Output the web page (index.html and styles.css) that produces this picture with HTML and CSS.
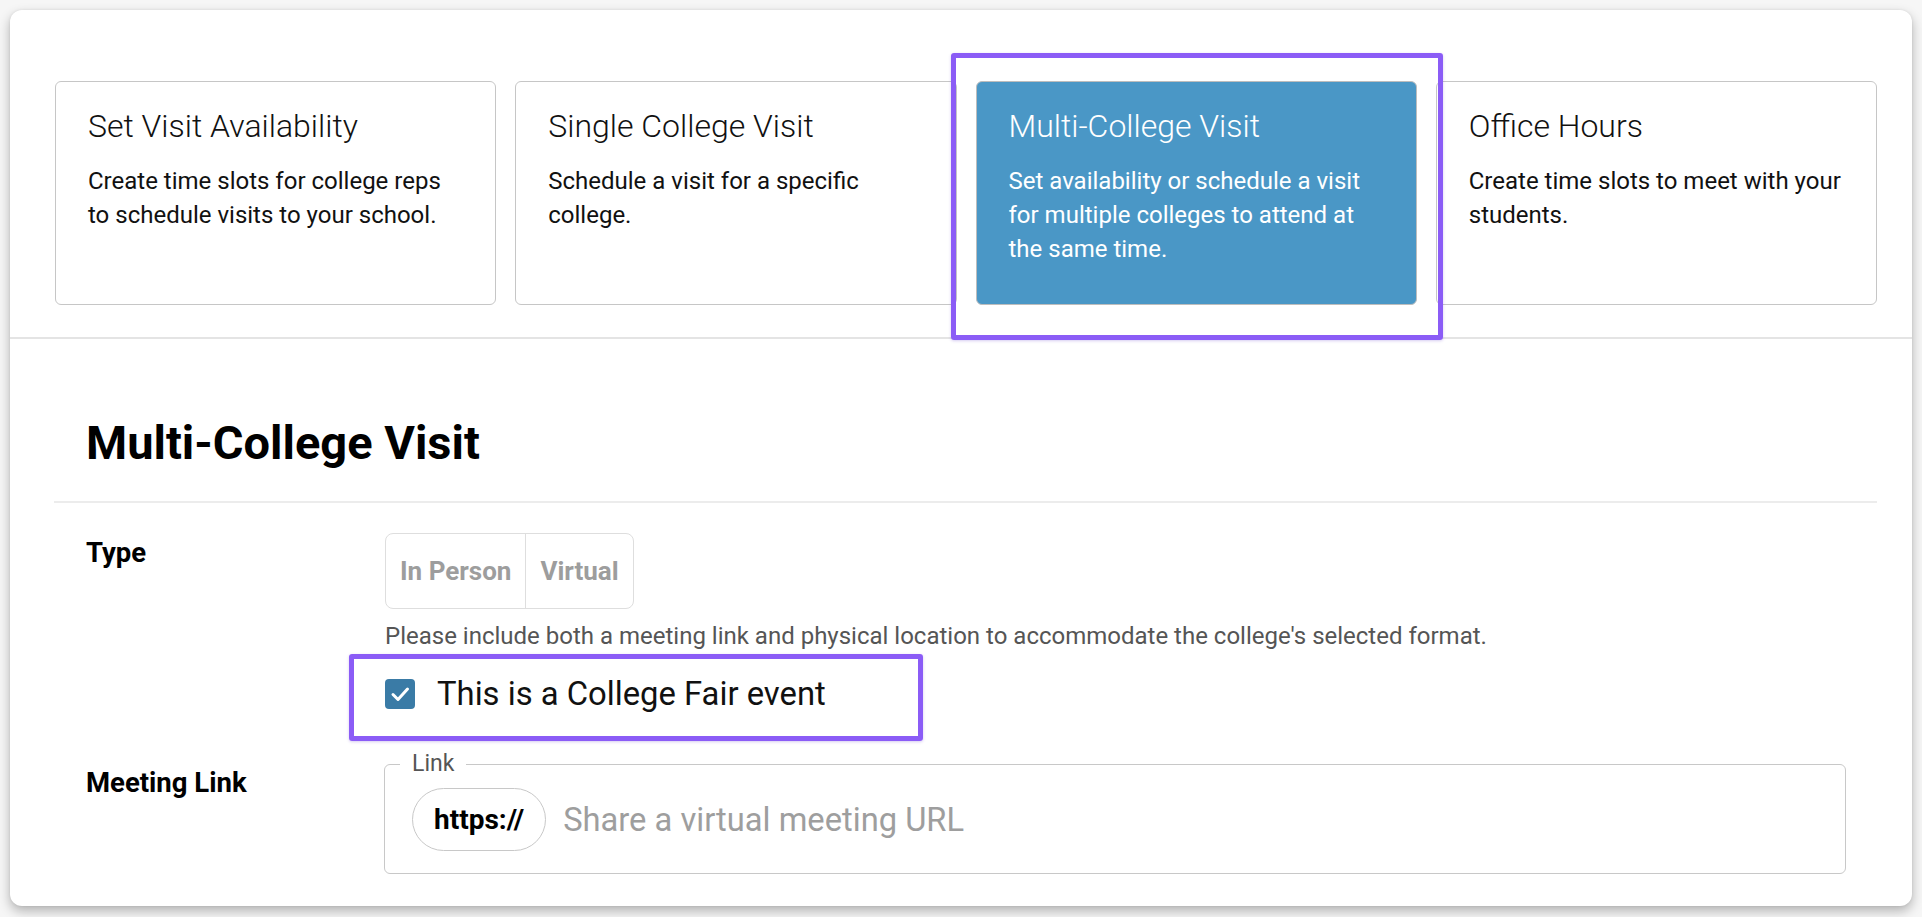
FILE: index.html
```html
<!DOCTYPE html>
<html lang="en">
<head>
<meta charset="utf-8">
<title>Multi-College Visit</title>
<link rel="stylesheet" href="styles.css">
</head>
<body>
<div class="card">
  <div class="types">
    <div class="tile">
      <div class="tile-title">Set Visit Availability</div>
      <div class="tile-desc">Create time slots for college reps to schedule visits to your school.</div>
    </div>
    <div class="tile">
      <div class="tile-title">Single College Visit</div>
      <div class="tile-desc">Schedule a visit for a specific college.</div>
    </div>
    <div class="tile tile-active">
      <div class="tile-title">Multi-College Visit</div>
      <div class="tile-desc">Set availability or schedule a visit for multiple colleges to attend at the same time.</div>
    </div>
    <div class="tile">
      <div class="tile-title">Office Hours</div>
      <div class="tile-desc">Create time slots to meet with your students.</div>
    </div>
  </div>
  <div class="highlight highlight-tile"></div>

  <div class="form">
    <h1 class="form-title">Multi-College Visit</h1>
    <div class="row row-type">
      <div class="label">Type</div>
      <div class="field">
        <div class="toggle">
          <span class="toggle-btn">In Person</span>
          <span class="toggle-btn toggle-btn-last">Virtual</span>
        </div>
        <div class="helper">Please include both a meeting link and physical location to accommodate the college's selected format.</div>
        <div class="check-row">
          <span class="checkbox">
            <svg viewBox="0 0 30 30" width="30" height="30"><path d="M8 15.5 L13 20.5 L22.5 10" fill="none" stroke="#fff" stroke-width="3" stroke-linecap="round" stroke-linejoin="round"/></svg>
          </span>
          <span class="check-label">This is a College Fair event</span>
          <div class="highlight highlight-check"></div>
        </div>
      </div>
    </div>
    <div class="row row-link">
      <div class="label label-link">Meeting Link</div>
      <div class="field">
        <fieldset class="link-box">
          <legend class="link-legend">Link</legend>
          <div class="link-inner">
            <span class="pill">https://</span>
            <span class="placeholder">Share a virtual meeting URL</span>
          </div>
        </fieldset>
      </div>
    </div>
  </div>
</div>
</body>
</html>
```

FILE: styles.css
```css
html, body {
  margin: 0;
  padding: 0;
}
body {
  background: #f6f6f6;
  font-family: Roboto, "Liberation Sans", Arial, sans-serif;
  color: #111;
  width: 1922px;
  height: 917px;
  overflow: hidden;
}
.card {
  position: relative;
  margin: 10px;
  width: 1902px;
  height: 896px;
  background: #fff;
  border-radius: 12px;
  box-shadow: 0 5px 12px rgba(0, 0, 0, 0.28), 0 0 3px rgba(0, 0, 0, 0.08);
  box-sizing: border-box;
  overflow: hidden;
}
.types {
  display: grid;
  grid-template-columns: repeat(4, 1fr);
  column-gap: 19px;
  padding: 71px 35px 32px 45px;
  border-bottom: 2px solid #e4e4e4;
}
.tile {
  height: 224px;
  box-sizing: border-box;
  border: 1.5px solid #c6c6c6;
  border-radius: 6px;
  padding: 26px 32px 0 32px;
  background: #fff;
}
.tile-title {
  font-weight: 300;
  font-size: 32px;
  line-height: 37px;
  color: #111;
}
.tile-desc {
  margin-top: 19px;
  font-size: 24px;
  line-height: 34px;
  color: #111;
}
.tile-active {
  background: #4a97c6;
  border-color: #bdbdbd;
}
.tile-active .tile-title,
.tile-active .tile-desc {
  color: #fff;
}
.highlight {
  position: absolute;
  border: 5px solid #8b5cf6;
  border-radius: 3px;
  box-sizing: border-box;
  box-shadow: 0 1px 3px rgba(90, 50, 200, 0.25);
  pointer-events: none;
}
.highlight-tile {
  left: 941px;
  top: 43px;
  width: 492px;
  height: 287px;
}
.form {
  padding: 0 35px 0 44px;
}
.form-title {
  margin: 0;
  padding: 77px 32px 31px;
  font-size: 47px;
  font-weight: 700;
  line-height: 54px;
  border-bottom: 2px solid #ececec;
  color: #000;
}
.row {
  display: grid;
  grid-template-columns: 299px 1fr;
  padding-left: 32px;
}
.row-type {
  margin-top: 30px;
}
.label {
  font-size: 27.5px;
  font-weight: 700;
  line-height: 34px;
  margin-top: 3px;
  color: #000;
}
.toggle {
  display: inline-flex;
  height: 76px;
  box-sizing: border-box;
  border: 1.5px solid #dedede;
  border-radius: 8px;
}
.toggle-btn {
  display: flex;
  align-items: center;
  padding: 0 14px;
  font-size: 26px;
  font-weight: 700;
  color: #9d9d9d;
}
.toggle-btn-last {
  border-left: 1.5px solid #dedede;
}
.helper {
  margin-top: 12px;
  font-size: 24px;
  line-height: 30px;
  color: #555;
}
.check-row {
  position: relative;
  display: flex;
  align-items: center;
  height: 60px;
  margin-top: 13px;
}
.checkbox {
  display: block;
  width: 30px;
  height: 30px;
  border-radius: 4px;
  background: #3a7ba6;
  flex: none;
}
.checkbox svg {
  display: block;
}
.check-label {
  margin-left: 22px;
  font-size: 32.8px;
  color: #111;
  line-height: 38px;
}
.highlight-check {
  left: -36px;
  top: -10px;
  width: 574px;
  height: 87px;
}
.row-link {
  margin-top: 28px;
}
.label-link {
  margin-top: 14px;
}
.link-box {
  margin: 0 31px 0 -1px;
  padding: 0 27px 22px;
  border: 1.5px solid #c8c8c8;
  border-radius: 6px;
  min-width: 0;
}
.link-legend {
  margin-left: -12px;
  padding: 0 12px;
  font-size: 23px;
  line-height: 24px;
  color: #555;
}
.link-inner {
  display: flex;
  align-items: center;
  padding-top: 12px;
}
.pill {
  display: flex;
  align-items: center;
  height: 63px;
  box-sizing: border-box;
  padding: 0 21px;
  border: 1.5px solid #c8c8c8;
  border-radius: 32px;
  font-size: 28px;
  font-weight: 700;
  color: #000;
}
.placeholder {
  margin-left: 17px;
  font-size: 32.7px;
  color: #9e9e9e;
}
```
